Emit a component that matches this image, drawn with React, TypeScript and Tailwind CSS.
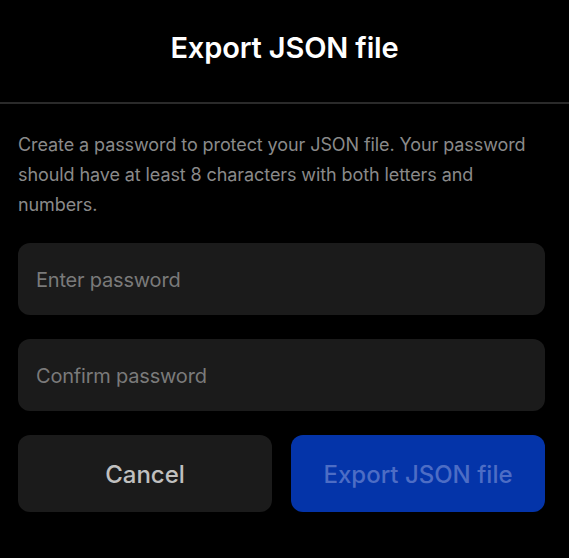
export default function App() {
  return (
    <div
      className="min-h-[558px] w-full bg-black flex flex-col"
      style={{ fontFamily: "Inter, 'Noto Sans', sans-serif" }}
    >
      {/* Header */}
      <div className="h-[104px] flex items-center justify-center border-b-2 border-[#2a2a2a]">
        <h1 className="text-[29px] font-semibold text-white tracking-[-0.005em] pb-[6px]">
          Export JSON file
        </h1>
      </div>

      {/* Body */}
      <div className="pl-[18px] pr-[24px] pt-[26px] flex flex-col">
        <p className="text-[18px] leading-[30px] text-[#8a8a8a] tracking-[-0.005em]">
          Create a password to protect your JSON file. Your password should have at least 8
          characters with both letters and numbers.
        </p>

        <div className="mt-[23px] flex flex-col gap-[24px]">
          <input
            type="password"
            placeholder="Enter password"
            className="h-[72px] w-full rounded-[12px] bg-[#1b1b1b] px-[18px] pt-[2px] text-[20px] text-white placeholder:text-[#7a7a7a] outline-none tracking-[-0.01em]"
          />
          <input
            type="password"
            placeholder="Confirm password"
            className="h-[72px] w-full rounded-[12px] bg-[#1b1b1b] px-[18px] pt-[2px] text-[20px] text-white placeholder:text-[#7a7a7a] outline-none tracking-[-0.01em]"
          />
        </div>

        <div className="mt-[24px] grid grid-cols-2 gap-[19px]">
          <button className="h-[77px] rounded-[12px] bg-[#1b1b1b] pt-[3px] text-[24px] font-medium text-[#c0c0c0]">
            Cancel
          </button>
          <button className="h-[77px] rounded-[12px] bg-[#0434a9] pt-[3px] text-[24px] font-medium text-[#4d6dc5]">
            Export JSON file
          </button>
        </div>
      </div>
    </div>
  );
}
